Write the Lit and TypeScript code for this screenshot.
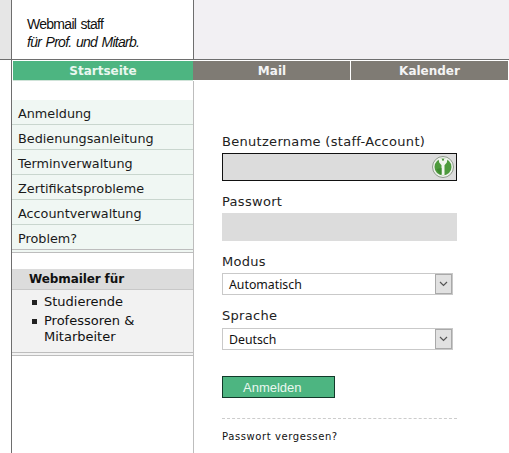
import { LitElement, html, css } from "lit";
import { customElement } from "lit/decorators.js";

@customElement("app-root")
export class AppRoot extends LitElement {
  static styles = css`
    :host { display: block; width: 509px; height: 453px; overflow: hidden; background: #fff; font-family: "DejaVu Sans", Verdana, sans-serif; color: #111; }
    * { box-sizing: border-box; }
    .head { display: grid; grid-template-columns: 11px 1px 181px 1px 1fr; height: 60px; border-bottom: 1px solid #6e6e6e; }
    .strip { background: #e6e6e6; }
    .vl { background: #6e6e6e; }
    .brand { padding: 15px 0 0 15px; font: 14px/18px "Liberation Sans", Arial, sans-serif; color: #111; letter-spacing: -0.72px; word-spacing: 1.2px; }
    .brand i { display: block; }
    .fill { background: #f2f0f3; }
    .nav { display: grid; grid-template-columns: 11px 1px 1px 180px 1px 156px 1px 157px 1px; height: 21px; align-items: start; }
    .nav .vl { height: 21px; }
    .tab { margin-top: 1px; height: 19px; color: #f4f4f4; font-weight: 700; font-size: 12px; line-height: 20px; text-align: center; background: #7f7b74; }
    .tab.on { height: 20px; background: #4db581; border-bottom: 1px solid #cfe3d8; color: #e9f7ef; }
    .main { display: grid; grid-template-columns: 11px 1px 181px 1px 1fr; height: 372px; }
    .side { padding-top: 19px; }
    .rl { background: #bdbdbd; }
    .menu { list-style: none; margin: 0; padding: 0; }
    .menu li { height: 25px; background: #f0f7f3; border-bottom: 1px solid #c9d6ce; padding-left: 6px; font-size: 12.8px; line-height: 28px; color: #1a1a1a; }
    .menu li:last-child { border-bottom: 4px double #bdbdbd; height: 28px; }
    .box { margin-top: 16px; background: #f2f2f2; border-bottom: 4px double #bdbdbd; height: 87px; }
    .box h4 { margin: 0; height: 21px; background: #dcdcdc; border-bottom: 1px solid #c8c8c8; padding-left: 17px; font-size: 12px; line-height: 21px; font-weight: 700; letter-spacing: -0.1px; }
    .box ul { list-style: none; margin: 0; padding: 4px 0 0 32px; font-size: 13px; line-height: 16px; }
    .box li { position: relative; margin-bottom: 3px; }
    .box li::before { content: ""; position: absolute; left: -12px; top: 6px; width: 5px; height: 5px; background: #222; }
    .form { padding: 53px 0 0 28px; width: 263px; }
    label { display: block; font-size: 13px; line-height: 16px; height: 16px; color: #222; letter-spacing: 0.3px; }
    .input { position: relative; width: 235px; height: 28px; margin-top: 3px; background: #dcdcdc; }
    .input.focus { border: 1px solid #111; }
    .input svg { position: absolute; right: 2px; top: 2px; }
    .pw { margin-top: 3px; }
    .gap { margin-top: 13px; }
    .sel { display: flex; width: 231px; height: 22px; margin-top: 3px; border: 1px solid #c9c9c9; background: #fff; font: 12.3px/20px "Noto Sans", "Open Sans", sans-serif; color: #111; padding-left: 6px; align-items: center; justify-content: space-between; }
    .sel span { margin-top: 2px; }
    .sel b { display: flex; align-items: center; justify-content: center; width: 17px; height: 20px; background: #e1e1e1; border: 1px solid #a9a9a9; }
    .sel2 { margin-top: 4px; }
    .btn { display: block; width: 113px; height: 22px; margin-top: 26px; background: #4db581; border: 1px solid #12392a; color: #e9f7ef; font: 13px/18px "Liberation Sans", Arial, sans-serif; padding: 1px 0 0 20px; text-align: left; }
    .sep { margin-top: 20px; border-top: 1px dashed #cccccc; padding-top: 10px; font-size: 10px; line-height: 16px; width: 235px; color: #111; letter-spacing: 0.6px; }
  `;

  private chevron() {
    return html`<b><svg width="9" height="6" viewBox="0 0 9 6"><path d="M1 1l3.500 3.500L8 1" fill="none" stroke="#555" stroke-width="1.200"/></svg></b>`;
  }

  render() {
    return html`
      <div class="head">
        <div class="strip"></div><div class="vl"></div>
        <div class="brand">Webmail staff<i>für Prof. und Mitarb.</i></div>
        <div class="vl"></div><div class="fill"></div>
      </div>
      <div class="nav">
        <div></div><div class="vl"></div><div></div>
        <div class="tab on">Startseite</div>
        <div class="tab"></div>
        <div class="tab">Mail</div>
        <div></div>
        <div class="tab">Kalender</div>
        <div></div>
      </div>
      <div class="main">
        <div></div><div class="vl"></div>
        <div class="side">
          <ul class="menu">
            <li>Anmeldung</li><li>Bedienungsanleitung</li><li>Terminverwaltung</li>
            <li>Zertifikatsprobleme</li><li>Accountverwaltung</li><li>Problem?</li>
          </ul>
          <div class="box">
            <h4>Webmailer für</h4>
            <ul><li>Studierende</li><li>Professoren &amp; Mitarbeiter</li></ul>
          </div>
        </div>
        <div class="rl"></div>
        <div class="form">
          <label>Benutzername (staff-Account)</label>
          <div class="input focus">
            <svg width="22" height="22" viewBox="0 0 22 22">
              <circle cx="11" cy="11" r="10.500" fill="#eef2ec" stroke="#8f9a8c"/>
              <circle cx="11" cy="11" r="8.500" fill="#4d9a3c"/>
              <path d="M6.500 2.800h3.200l.7 2h1.200l.7-2h3.200l-.7 3.700-2.300 2.700V19.500H9.500V9.200L7.200 6.500z" fill="#f2f5ef"/>
              <path d="M4.500 13q2 4.500 5 5.500V12z" fill="#3f8a30"/>
            </svg>
          </div>
          <label class="gap">Passwort</label>
          <div class="input pw"></div>
          <label class="gap">Modus</label>
          <div class="sel"><span>Automatisch</span>${this.chevron()}</div>
          <label class="gap">Sprache</label>
          <div class="sel sel2"><span>Deutsch</span>${this.chevron()}</div>
          <button class="btn">Anmelden</button>
          <div class="sep">Passwort vergessen?</div>
        </div>
      </div>
    `;
  }
}
